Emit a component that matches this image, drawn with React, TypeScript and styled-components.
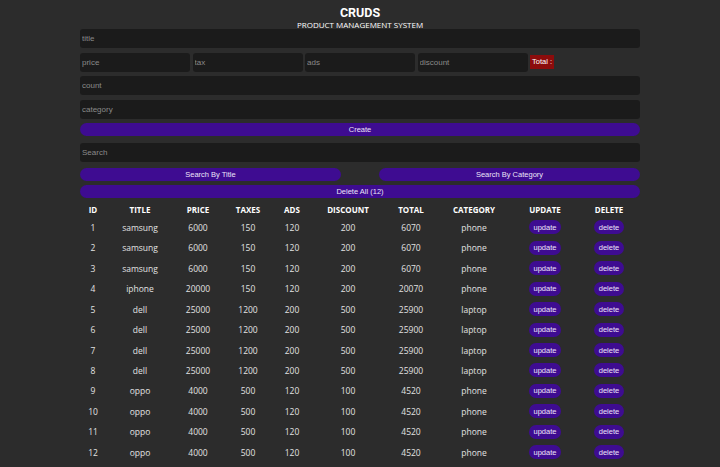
import React from 'react'
import styled, { createGlobalStyle } from 'styled-components'

type Product = {
    id: number
    title: string
    price: number
    taxes: number
    ads: number
    discount: number
    category: string
}

const products: Product[] = [
    { id: 1, title: 'samsung', price: 6000, taxes: 150, ads: 120, discount: 200, category: 'phone' },
    { id: 2, title: 'samsung', price: 6000, taxes: 150, ads: 120, discount: 200, category: 'phone' },
    { id: 3, title: 'samsung', price: 6000, taxes: 150, ads: 120, discount: 200, category: 'phone' },
    { id: 4, title: 'iphone', price: 20000, taxes: 150, ads: 120, discount: 200, category: 'phone' },
    { id: 5, title: 'dell', price: 25000, taxes: 1200, ads: 200, discount: 500, category: 'laptop' },
    { id: 6, title: 'dell', price: 25000, taxes: 1200, ads: 200, discount: 500, category: 'laptop' },
    { id: 7, title: 'dell', price: 25000, taxes: 1200, ads: 200, discount: 500, category: 'laptop' },
    { id: 8, title: 'dell', price: 25000, taxes: 1200, ads: 200, discount: 500, category: 'laptop' },
    { id: 9, title: 'oppo', price: 4000, taxes: 500, ads: 120, discount: 100, category: 'phone' },
    { id: 10, title: 'oppo', price: 4000, taxes: 500, ads: 120, discount: 100, category: 'phone' },
    { id: 11, title: 'oppo', price: 4000, taxes: 500, ads: 120, discount: 100, category: 'phone' },
    { id: 12, title: 'oppo', price: 4000, taxes: 500, ads: 120, discount: 100, category: 'phone' },
]

const columns = [
    { name: 'ID', width: 26 },
    { name: 'TITLE', width: 68 },
    { name: 'PRICE', width: 48 },
    { name: 'TAXES', width: 52 },
    { name: 'ADS', width: 36 },
    { name: 'DISCOUNT', width: 76 },
    { name: 'TOTAL', width: 50 },
    { name: 'CATEGORY', width: 76 },
    { name: 'UPDATE', width: 66 },
    { name: 'DELETE', width: 62 },
]

const App = () => {
    return (
        <>
            <GlobalStyle />
            <Page>
                <Header>
                    <Title>CRUDS</Title>
                    <Subtitle>PRODUCT MANAGEMENT SYSTEM</Subtitle>
                </Header>
                <Form>
                    <Input type="text" autoComplete="off" placeholder="title" />
                    <PriceRow>
                        <Input type="number" placeholder="price" />
                        <Input type="number" placeholder="tax" />
                        <Input type="number" placeholder="ads" />
                        <Input type="number" placeholder="discount" />
                        <Total>Total :</Total>
                    </PriceRow>
                    <Input type="number" placeholder="count" />
                    <Input type="text" autoComplete="off" placeholder="category" />
                    <Button>Create</Button>
                    <SearchInput type="text" autoComplete="off" placeholder="Search" />
                    <SearchRow>
                        <Button>Search By Title</Button>
                        <Button>Search By Category</Button>
                    </SearchRow>
                    <Button>Delete All ({products.length})</Button>
                </Form>
                <Table>
                    <colgroup>
                        {columns.map(c => <col key={c.name} style={{ width: c.width }} />)}
                    </colgroup>
                    <thead>
                        <tr>
                            {columns.map(c => <Th key={c.name}>{c.name}</Th>)}
                        </tr>
                    </thead>
                    <tbody>
                        {products.map(p => (
                            <tr key={p.id}>
                                <Td>{p.id}</Td>
                                <Td>{p.title}</Td>
                                <Td>{p.price}</Td>
                                <Td>{p.taxes}</Td>
                                <Td>{p.ads}</Td>
                                <Td>{p.discount}</Td>
                                <Td>{p.price + p.taxes + p.ads - p.discount}</Td>
                                <Td>{p.category}</Td>
                                <Td><SmallButton>update</SmallButton></Td>
                                <Td><SmallButton>delete</SmallButton></Td>
                            </tr>
                        ))}
                    </tbody>
                </Table>
            </Page>
        </>
    )
}

const GlobalStyle = createGlobalStyle`
  html, body {
    margin: 0;
    padding: 0;
    background: #2c2c2c;
  }
  * {
    box-sizing: border-box;
  }
  input::-webkit-outer-spin-button,
  input::-webkit-inner-spin-button {
    -webkit-appearance: none;
    margin: 0;
  }
`
const Page = styled.div`
  width: 560px;
  margin: 0 auto;
  color: #fff;
  font-family: "Open Sans", "DejaVu Sans", sans-serif;
`
const Header = styled.div`
  text-align: center;
  padding-top: 6px;
  height: 29px;
`
const Title = styled.h1`
  margin: 0;
  font-family: Roboto, "Open Sans", sans-serif;
  font-size: 12.5px;
  line-height: 14px;
  font-weight: 700;
`
const Subtitle = styled.p`
  margin: 0;
  font-size: 8px;
  line-height: 9px;
  color: #fff;
`
const Form = styled.div`
  display: flex;
  flex-direction: column;
  gap: 4.6px;
`
const Input = styled.input`
  width: 100%;
  height: 19px;
  border: none;
  outline: none;
  border-radius: 3px;
  background: #1b1b1b;
  color: #ccc;
  caret-color: transparent;
  padding: 0 2px;
  font-family: "Liberation Sans", Arial, sans-serif;
  font-size: 8px;
  -moz-appearance: textfield;
  &::placeholder {
    color: #8a8a8a;
    -webkit-text-fill-color: #8a8a8a;
    opacity: 1;
  }
`
const SearchInput = styled(Input)`
  margin-top: 2px;
  margin-bottom: 1px;
`
const PriceRow = styled.div`
  display: flex;
  align-items: center;
  gap: 2.5px;
  ${Input} {
    width: 110px;
    flex: none;
  }
`
const Total = styled.span`
  background: #8c0c0c;
  color: #fff;
  font-family: "Liberation Sans", Arial, sans-serif;
  font-size: 7.5px;
  line-height: 14px;
  height: 14px;
  padding: 0 2px;
  white-space: nowrap;
`
const Button = styled.button`
  width: 100%;
  height: 13px;
  border: none;
  border-radius: 7px;
  background: #3e0c91;
  color: #ece4f8;
  font-family: "Liberation Sans", Arial, sans-serif;
  font-size: 7.5px;
  padding: 0;
  cursor: pointer;
`
const SearchRow = styled.div`
  display: flex;
  justify-content: space-between;
  ${Button} {
    width: 261px;
  }
`
const Table = styled.table`
  width: 560px;
  margin-top: 4px;
  border-collapse: collapse;
  table-layout: fixed;
  text-align: center;
`
const Th = styled.th`
  height: 15px;
  padding: 0;
  font-size: 8px;
  font-weight: 700;
  color: #fff;
`
const Td = styled.td`
  height: 20.45px;
  padding: 0;
  font-size: 8.5px;
  color: #e2e2e2;
`
const SmallButton = styled.button`
  height: 14px;
  border: none;
  border-radius: 7px;
  padding: 0 5px;
  background: #3e0c91;
  color: #ece4f8;
  font-family: "Liberation Sans", Arial, sans-serif;
  font-size: 7.5px;
  cursor: pointer;
`

export default App
